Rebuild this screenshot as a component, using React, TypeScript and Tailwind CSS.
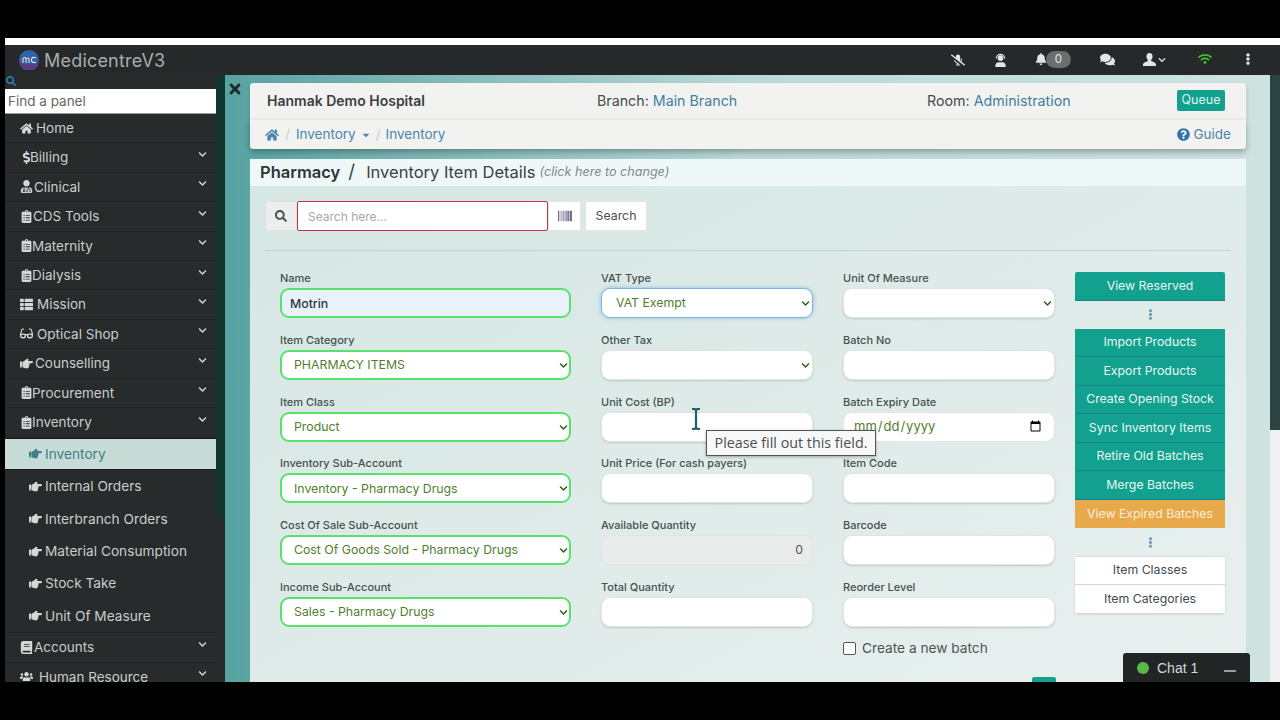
import {
  FaHome, FaDollarSign, FaUserMd, FaClipboardList, FaGlasses, FaComments, FaThList,
  FaHandPointRight, FaBook, FaUsers, FaChevronDown, FaBell, FaWifi,
  FaEllipsisV, FaTimes, FaSearch, FaBarcode, FaCaretDown, FaQuestionCircle, FaMicrophoneSlash,
} from 'react-icons/fa';

const font = "font-['Inter','Liberation_Sans',sans-serif]";

// w = icon slot, so each label starts where it does in the app
const menuTop = [
  { label: 'Billing', icon: FaDollarSign, w: 'w-[10px]' },
  { label: 'Clinical', icon: FaUserMd, w: 'w-[14px]' },
  { label: 'CDS Tools', icon: FaClipboardList, w: 'w-[13px]' },
  { label: 'Maternity', icon: FaClipboardList, w: 'w-[12px]' },
  { label: 'Dialysis', icon: FaClipboardList, w: 'w-[12px]' },
  { label: 'Mission', icon: FaThList, w: 'w-[17px]' },
  { label: 'Optical Shop', icon: FaGlasses, w: 'w-[17px]' },
  { label: 'Counselling', icon: FaHandPointRight, w: 'w-[15px]' },
  { label: 'Procurement', icon: FaClipboardList, w: 'w-[12px]' },
  { label: 'Inventory', icon: FaClipboardList, w: 'w-[12px]' },
];

const subMenu = ['Internal Orders', 'Interbranch Orders', 'Material Consumption', 'Stock Take', 'Unit Of Measure'];

function MenuRow({ label, icon: Icon, w, chevron = true }: { label: string; icon: any; w: string; chevron?: boolean }) {
  return (
    <div className="h-[29.4px] shrink-0 flex items-center pl-[15px] pr-[9px] border-b border-[#212424] text-[13.5px] text-[#c9cdcc]">
      <span className={`${w} shrink-0`}>
        <Icon className="text-[13px] text-[#d5d8d7]" />
      </span>
      <span className="flex-1">{label}</span>
      {chevron && <FaChevronDown className="text-[9px] text-[#d5d8d7] -mt-[6px]" />}
    </div>
  );
}

function Sidebar() {
  return (
    <aside className="w-[211px] shrink-0 bg-[#272b2b] flex flex-col overflow-hidden">
      <div className="h-[14px] shrink-0 pl-[1px] pt-[1px]">
        <FaSearch className="text-[10px] text-[#2f7fb5]" />
      </div>
      <input
        readOnly
        placeholder="Find a panel"
        className="h-[25px] shrink-0 bg-white px-[3px] text-[13.5px] text-[#555] placeholder:text-[#666] border-b border-[#999] outline-none"
      />
      <MenuRow label="Home" icon={FaHome} w="w-[16px]" chevron={false} />
      {menuTop.map((m) => (
        <MenuRow key={m.label} label={m.label} icon={m.icon} w={m.w} />
      ))}
      <div className="h-[32.4px] shrink-0 mt-[0.5px] flex items-center pl-[24px] bg-[#c7dcd6] text-[13.7px] text-[#3f7f85] border-y border-[#161818]">
        <FaHandPointRight className="text-[13px] mr-[3px]" />
        Inventory
      </div>
      {subMenu.map((s) => (
        <div key={s} className="h-[32.4px] shrink-0 flex items-center pl-[24px] text-[13.7px] text-[#c9cdcc]">
          <FaHandPointRight className="text-[13px] text-[#d5d8d7] mr-[3px]" />
          {s}
        </div>
      ))}
      <div className="border-t border-[#212424]">
        <MenuRow label="Accounts" icon={FaBook} w="w-[14px]" />
      </div>
      <MenuRow label="Human Resource" icon={FaUsers} w="w-[19px]" />
    </aside>
  );
}

function Label({ children }: { children: string }) {
  return <label className="block h-[16px] mb-[2px] leading-[16px] text-[11px] font-medium text-[#45514f]">{children}</label>;
}

const fieldBase = 'w-full h-[30px] rounded-[9px] bg-white text-[12.3px] outline-none';

function Field({ label, children }: { label: string; children?: any }) {
  return (
    <div className="h-[61.8px]">
      <Label>{label}</Label>
      {children ?? <input readOnly className={`${fieldBase} border border-[#dfe6e4] shadow-[0_1px_2px_rgba(0,0,0,0.15)]`} />}
    </div>
  );
}

function SelectField({ label, value, valid, focus }: { label: string; value?: string; valid?: boolean; focus?: boolean }) {
  const look = valid
    ? 'border-2 border-[#59e26b] pl-[12px] pt-[1px]'
    : focus
      ? 'border border-[#7fb4e0] shadow-[0_0_4px_rgba(90,160,220,0.6)] pl-[14px]'
      : 'border border-[#dfe6e4] shadow-[0_1px_2px_rgba(0,0,0,0.15)] pl-[14px]';
  return (
    <Field label={label}>
      <div className="relative">
        <select defaultValue={value ?? ''} className={`${fieldBase} ${look} appearance-none pr-[16px] text-[#4f7f2d]`}>
          <option value={value ?? ''}>{value ?? ''}</option>
        </select>
        <FaChevronDown className="absolute right-[3px] top-[11px] text-[9px] text-[#2e5a12] pointer-events-none" />
      </div>
    </Field>
  );
}

function ActionButton({ children, tone = 'teal' }: { children: string; tone?: 'teal' | 'amber' | 'white' }) {
  const cls =
    tone === 'teal'
      ? 'bg-[#12a08f] text-[#e6f7f2] border-b border-[#17808f]'
      : tone === 'amber'
        ? 'bg-[#e8a94a] text-[#fbeedb]'
        : 'bg-white text-[#404a52] border-b border-[#cfd6d5]';
  return <div className={`h-[28.5px] flex items-center justify-center text-[12.3px] ${cls}`}>{children}</div>;
}

function Dots() {
  return (
    <div className="h-[28.300px] flex items-center justify-center text-[#6f97b5]">
      <FaEllipsisV className="text-[11px]" />
    </div>
  );
}

export default function App() {
  return (
    <div className={`${font} relative w-[1280px] h-[720px] bg-black overflow-hidden pt-[38px] pb-[38px] pl-[5px]`}>
      <div className="h-full flex flex-col">
        <div className="h-[7px] bg-white shrink-0" />
        <header className="h-[30px] shrink-0 bg-[#252929] flex items-center text-[#e4e6e6]">
          <div className="flex items-center pl-[14px] w-[300px]">
            <svg viewBox="0 0 20 20" className="w-[20px] h-[20px] mr-[5px]">
              <circle cx="10" cy="10" r="10" fill="#2c62b0" />
              <path d="M0 11a10 10 0 0 0 20 0c-4 4-14 4-20 0z" fill="#5a3f7f" />
              <path d="M4 13V8.500q3-2 3 0V13M7 9q3-2 3 0v4" fill="none" stroke="#e8d6b8" strokeWidth="1.2" />
              <path d="M17 8q-4-2-4.500 1.500T17 12.500" fill="none" stroke="#e8e8e8" strokeWidth="1.2" />
            </svg>
            <span className="text-[18px] text-[#a9adad] tracking-[0.2px]">MedicentreV3</span>
          </div>
          <div className="flex-1 relative h-full">
            <FaMicrophoneSlash className="absolute left-[646px] top-[8px] text-[14px]" />
            <svg viewBox="0 0 14 15" className="absolute left-[689px] top-[8px] w-[13px] h-[14px]" fill="currentColor">
              <circle cx="7" cy="5.500" r="3" />
              <path d="M2.500 6a4.500 4.500 0 0 1 9 0" fill="none" stroke="currentColor" strokeWidth="1.3" />
              <path d="M1.500 15v-2.200q0-2.300 3-2.800h5q3 .5 3 2.800V15z" />
            </svg>
            <FaBell className="absolute left-[730px] top-[8px] text-[12px]" />
            <span className="absolute left-[741px] top-[6px] w-[25px] h-[17px] rounded-full bg-[#6b6e6e] text-[11.5px] flex items-center justify-center">0</span>
            <FaComments className="absolute left-[795px] top-[7px] text-[15px]" />
            <svg viewBox="0 0 14 14" className="absolute left-[838px] top-[8px] w-[13px] h-[13px]" fill="currentColor">
              <path d="M7 0c2.200 0 3.300 1.700 3.300 3.700 0 1.600-.7 3-1.500 3.800-.3.500 0 1 .5 1.300 2 .9 4.200 1.500 4.700 3.200v2H0v-2c.5-1.700 2.700-2.300 4.700-3.200.5-.3.800-.8.500-1.300C4.400 6.700 3.700 5.300 3.700 3.700 3.700 1.700 4.800 0 7 0z" />
            </svg>
            <FaChevronDown className="absolute left-[853px] top-[11px] text-[8px]" />
            <FaWifi className="absolute left-[893px] top-[7px] text-[14px] text-[#3fbf2f]" />
            <FaEllipsisV className="absolute left-[937px] top-[8px] text-[12px]" />
          </div>
        </header>
        <div className="flex-1 flex min-h-0">
          <Sidebar />
          <div className="w-[9px] shrink-0 bg-[#262a2a]">
            <div className="h-[442px] bg-[#12352f]" />
          </div>
          <main className="relative flex-1 min-h-0 flex overflow-hidden bg-gradient-to-r from-[#56a3a1] via-[#bcdad8] to-[#cfe3e1]">
            <div className="w-[25px] shrink-0 pl-[2px] pt-[6px]">
              <FaTimes className="text-[16px] text-[#1f2b2b]" />
            </div>
            <div className="w-[996px] shrink-0 pt-[8px] flex flex-col">
              <div className="h-[37px] shrink-0 rounded-t-[3px] bg-[#f2f3f1] flex items-center pl-[17px] pr-[21px] pb-[2px] text-[14.25px] text-[#444b4b] shadow-[0_2px_4px_rgba(0,0,0,0.15)]">
                <span className="w-[330px] font-semibold text-[14px] text-[#3a4040]">Hanmak Demo Hospital</span>
                <span className="w-[330px]">Branch: <span className="text-[#3f7f9f]">Main Branch</span></span>
                <span className="flex-1">Room: <span className="text-[#3f7f9f]">Administration</span></span>
                <span className="h-[21px] w-[48px] justify-center rounded-[2px] bg-[#12a08f] text-[#dff5ef] text-[12.5px] flex items-center">Queue</span>
              </div>
              <div className="h-[29px] shrink-0 rounded-b-[3px] bg-[#f2f3f1] flex items-center pl-[15px] pr-[15px] text-[13.5px] text-[#4a86ad] shadow-[0_3px_6px_rgba(0,0,0,0.3)]">
                <FaHome className="text-[14px]" />
                <span className="text-[#ccc] mx-[6px]">/</span>
                <span>Inventory</span>
                <FaCaretDown className="text-[10px] ml-[5px]" />
                <span className="text-[#ccc] mx-[5px]">/</span>
                <span>Inventory</span>
                <span className="ml-auto flex items-center">
                  <FaQuestionCircle className="text-[13px] mr-[4px] text-[#2f74ad]" />
                  Guide
                </span>
              </div>
              <section className="mt-[10px] flex-1 min-h-0 flex flex-col bg-gradient-to-br from-[#d5e6e3] to-[#e8f0ee]">
                <div className="h-[27px] shrink-0 bg-[#eff8f8] flex items-center pl-[10px] pb-[1px] text-[#3a4242]">
                  <span className="text-[16.5px] font-semibold text-[#2e3434]">Pharmacy</span>
                  <span className="text-[19px] mx-[8px]">/</span>
                  <span className="text-[16.5px] ml-[3px]">Inventory Item Details</span>
                  <span className="text-[12.6px] italic text-[#7f8a8a] ml-[4px]">(click here to change)</span>
                </div>
                <div className="h-[65px] shrink-0 mx-[15px] border-b border-[#c4d3d0] pt-[15px] flex">
                  <div className="h-[30px] w-[32px] flex items-center justify-center bg-[#ebeeed] rounded-l-[3px] border border-[#dfe4e3] text-[#4b4f4f]">
                    <FaSearch className="text-[12px]" />
                  </div>
                  <input readOnly placeholder="Search here..." className="h-[30px] w-[251px] bg-white border border-[#c0344f] rounded-[2px] px-[10px] text-[12px] placeholder:text-[#a4a9a9] outline-none" />
                  <div className="h-[30px] w-[33px] bg-white border border-[#e2e7e6] flex items-center justify-center">
                    <FaBarcode className="text-[14px] text-[#4a3560]" />
                  </div>
                  <div className="h-[30px] w-[62px] ml-[4px] bg-white border border-[#e2e7e6] flex items-center justify-center text-[12.3px] text-[#4a4f4f]">Search</div>
                </div>
                <div className="flex-1 min-h-0 pl-[30px] pr-[21px] pt-[19px] flex overflow-hidden">
                  <div className="w-[291px] shrink-0">
                    <Field label="Name">
                      <input readOnly defaultValue="Motrin" className={`${fieldBase} !bg-[#e9f1fa] border-2 border-[#59e26b] px-[8px] font-medium text-[#2a3a3a]`} />
                    </Field>
                    <SelectField label="Item Category" value="PHARMACY ITEMS" valid />
                    <SelectField label="Item Class" value="Product" valid />
                    <SelectField label="Inventory Sub-Account" value="Inventory - Pharmacy Drugs" valid />
                    <SelectField label="Cost Of Sale Sub-Account" value="Cost Of Goods Sold - Pharmacy Drugs" valid />
                    <SelectField label="Income Sub-Account" value="Sales - Pharmacy Drugs" valid />
                  </div>
                  <div className="w-[212px] shrink-0 ml-[30px]">
                    <SelectField label="VAT Type" value="VAT Exempt" focus />
                    <SelectField label="Other Tax" />
                    <Field label="Unit Cost (BP)" />
                    <Field label="Unit Price (For cash payers)" />
                    <Field label="Available Quantity">
                      <div className={`${fieldBase} !bg-[#e9ecea] border border-[#dfe6e4] flex items-center justify-end pr-[9px] text-[#555]`}>0</div>
                    </Field>
                    <Field label="Total Quantity" />
                  </div>
                  <div className="w-[212px] shrink-0 ml-[30px]">
                    <SelectField label="Unit Of Measure" />
                    <Field label="Batch No" />
                    <Field label="Batch Expiry Date">
                      <input type="date" className={`${fieldBase} !text-[13px] border border-[#dfe6e4] pl-[9px] pr-[10px] text-[#4f7f2d]`} />
                    </Field>
                    <Field label="Item Code" />
                    <Field label="Barcode" />
                    <Field label="Reorder Level" />
                    <label className="flex items-center text-[13.7px] text-[#4a5553] -mt-[3px]">
                      <span className="w-[13px] h-[13px] rounded-[2px] border border-[#555] bg-white mr-[6px]" />
                      Create a new batch
                    </label>
                  </div>
                  <div className="w-[150px] shrink-0 ml-[20px] pt-[2px]">
                    <div className="rounded-t-[2px] overflow-hidden"><ActionButton>View Reserved</ActionButton></div>
                    <Dots />
                    {['Import Products', 'Export Products', 'Create Opening Stock', 'Sync Inventory Items', 'Retire Old Batches', 'Merge Batches'].map((b) => (
                      <ActionButton key={b}>{b}</ActionButton>
                    ))}
                    <ActionButton tone="amber">View Expired Batches</ActionButton>
                    <Dots />
                    <div className="rounded-b-[3px] overflow-hidden shadow-[0_0_2px_rgba(0,0,0,0.2)]">
                      <ActionButton tone="white">Item Classes</ActionButton>
                      <ActionButton tone="white">Item Categories</ActionButton>
                    </div>
                  </div>
                </div>
              </section>
            </div>
            <div className="absolute right-0 top-0 bottom-0 w-[10px] bg-[#eef1f0]">
              <div className="h-[355px] bg-[#2b4442]" />
            </div>
          </main>
        </div>
      </div>

      <div className="absolute left-[706px] top-[430px] w-[170px] h-[26px] bg-[#f7f8f7] border border-[#555] shadow-[0_1px_3px_rgba(0,0,0,0.3)] flex items-center justify-center font-['Open_Sans',sans-serif] text-[14.3px] text-[#4a4f55]">
        Please fill out this field.
      </div>

      <svg viewBox="0 0 10 22" className="absolute left-[691px] top-[408px] w-[10px] h-[22px]">
        <path d="M1 1h2.500L5 2l1.500-1H9M5 2v18M1 21h2.500L5 20l1.500 1H9" fill="none" stroke="#1f5f68" strokeWidth="2.200" />
      </svg>

      <div className="absolute left-[1032px] top-[677px] w-[24px] h-[5px] bg-[#12a08f] rounded-t-[2px]" />

      <div className="absolute left-[1123px] top-[653px] w-[127px] h-[29px] rounded-t-[3px] bg-[#222525] flex items-center pl-[14px] pt-[1px] font-['Liberation_Sans',sans-serif] text-[14px] text-[#d5d8d8]">
        <span className="w-[12px] h-[12px] rounded-full bg-[#58b947] mr-[8px]" />
        Chat 1
        <span className="w-[12px] h-[2px] bg-[#9a9d9d] ml-[26px] mt-[5px]" />
      </div>
    </div>
  );
}
